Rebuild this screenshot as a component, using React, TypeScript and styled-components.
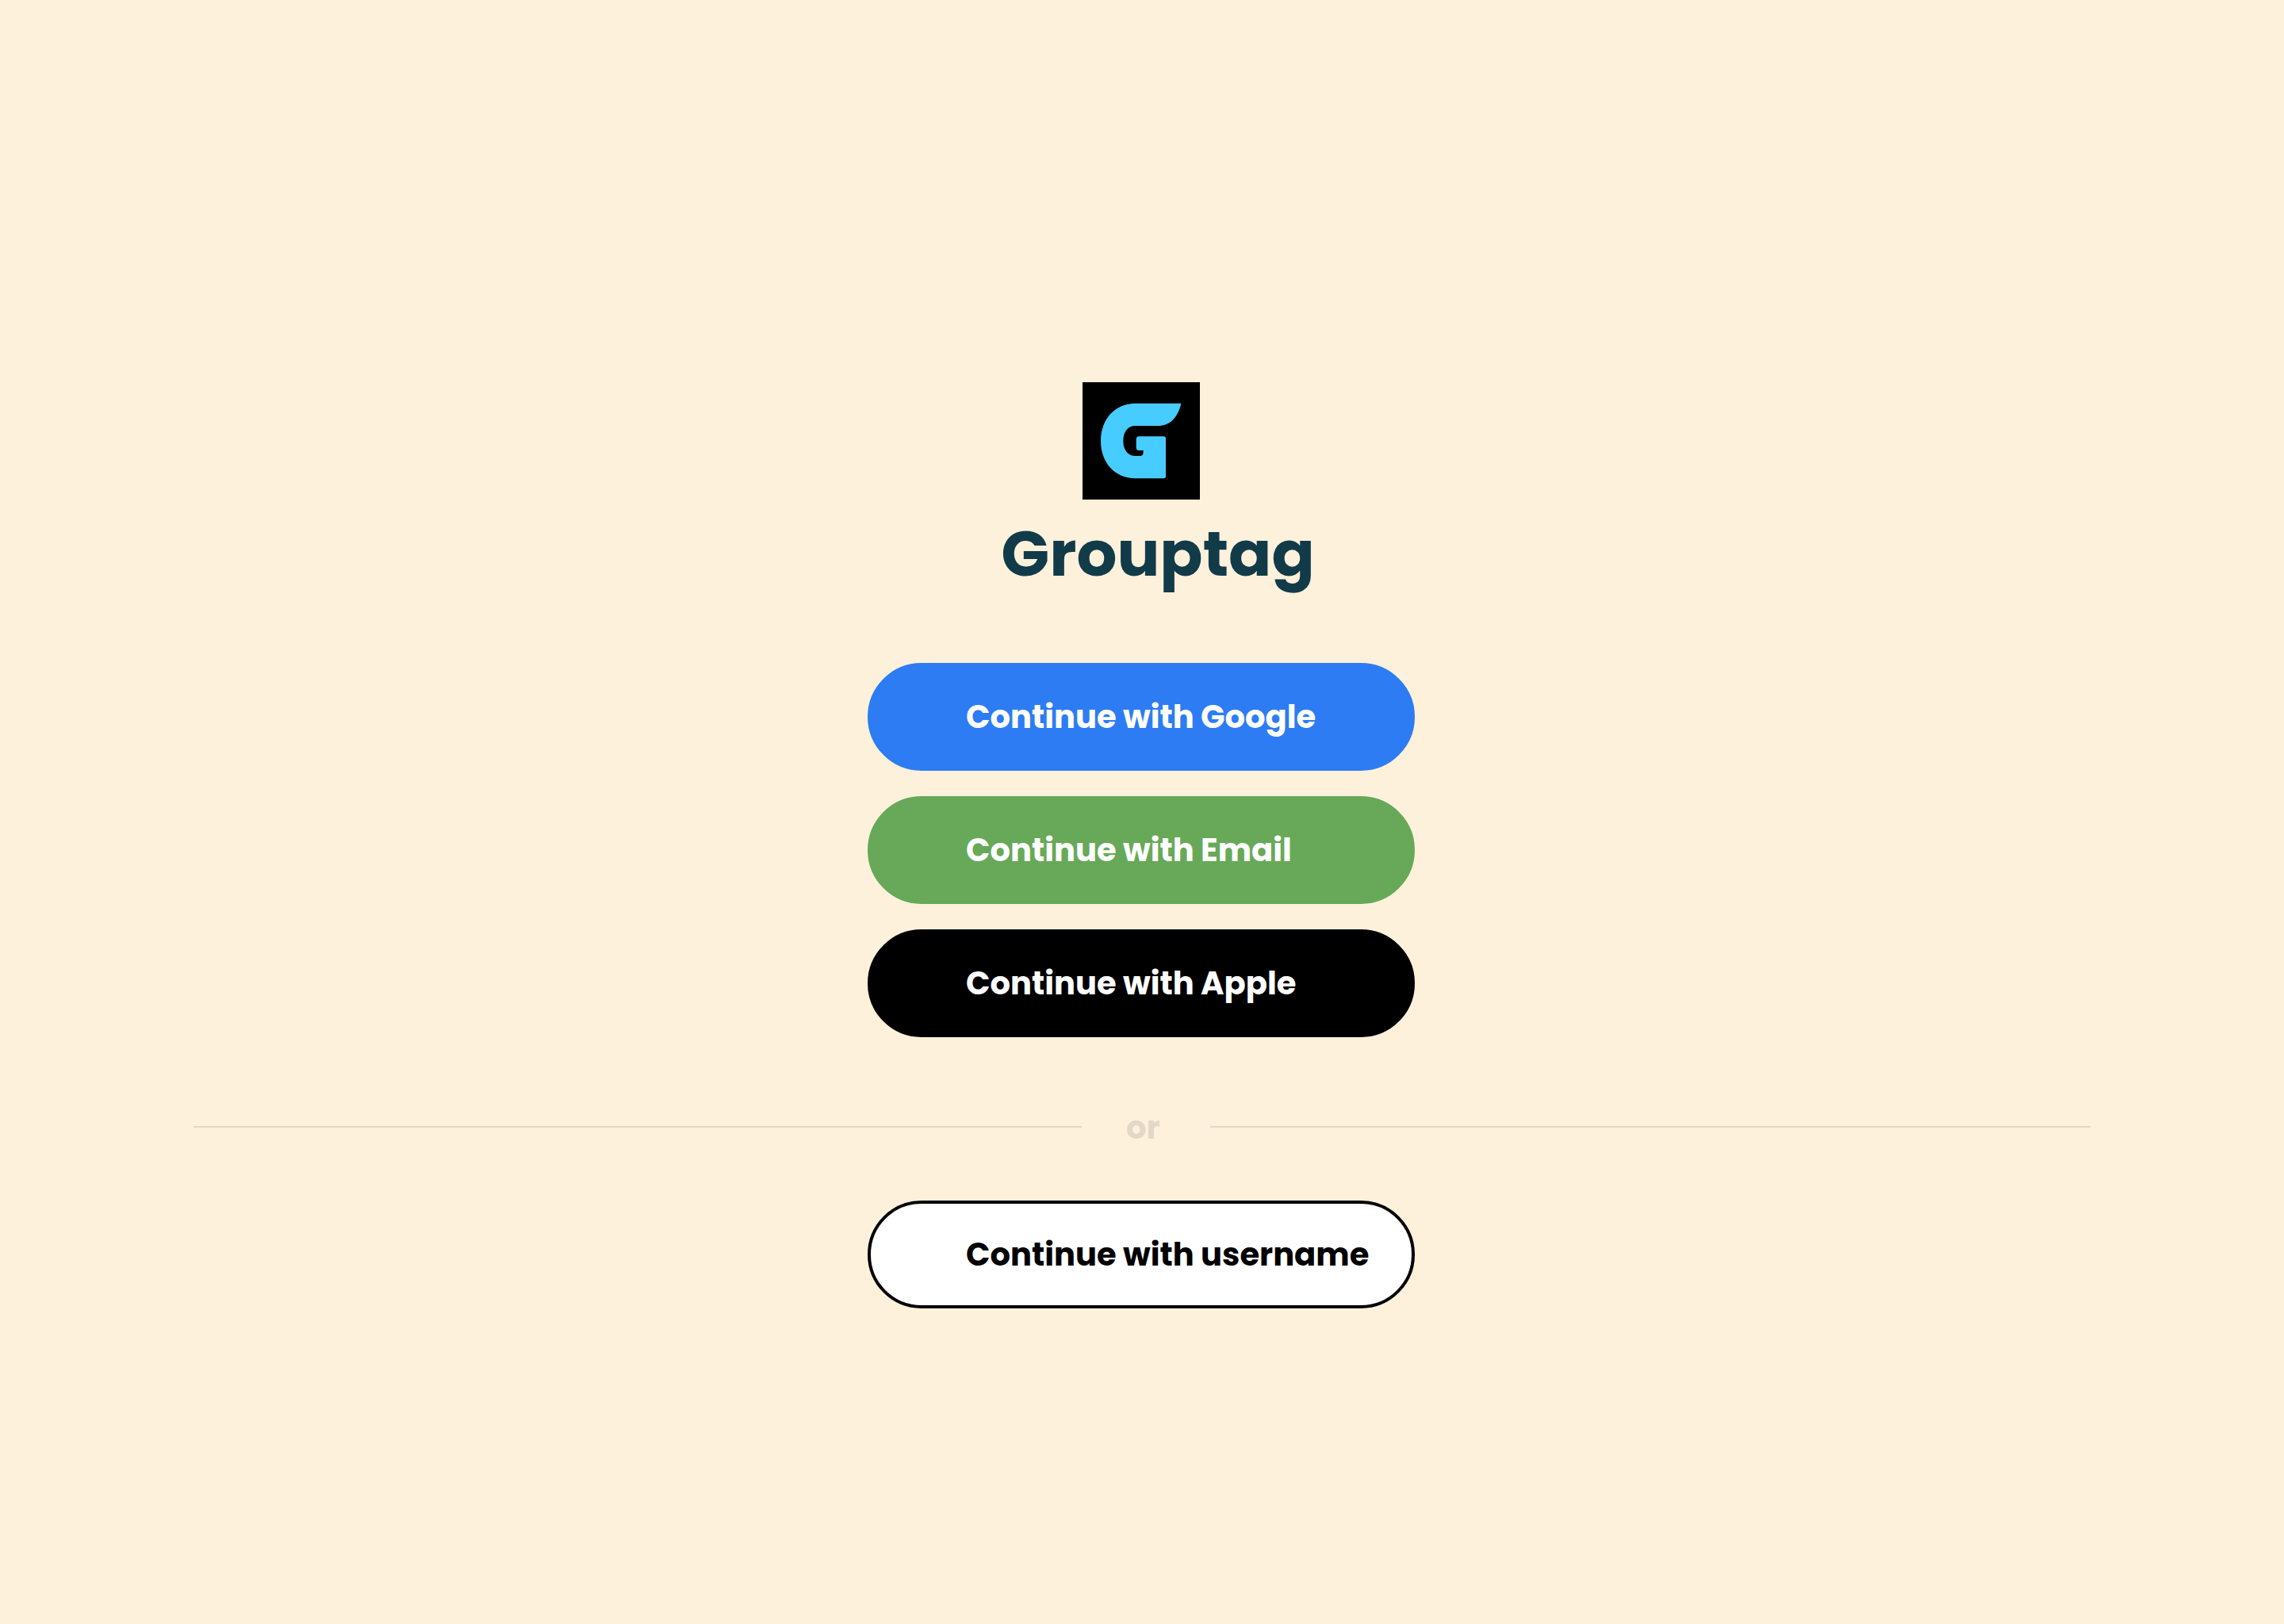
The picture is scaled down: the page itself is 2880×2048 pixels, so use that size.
import React from "react";
import styled, { createGlobalStyle } from "styled-components";

const GlobalStyle = createGlobalStyle`
  *, *::before, *::after {
    box-sizing: border-box;
  }
  body {
    margin: 0;
    background: #fef1db;
    font-family: Poppins, Inter, "Open Sans", sans-serif;
  }
`;

const Page = styled.main`
  display: flex;
  flex-direction: column;
  align-items: center;
  justify-content: center;
  min-height: 100vh;
  padding: 84px 2px 0 0;
  background: #fef1db;
`;

const Brand = styled.header`
  display: flex;
  flex-direction: column;
  align-items: center;
`;

const Logo = styled.svg`
  display: block;
  width: 148px;
  height: 148px;
  background: #000;
`;

const Title = styled.h1`
  margin: 8px 0 78px;
  padding-left: 42px;
  color: #123b49;
  font-size: 80px;
  font-weight: 700;
  line-height: 120px;
`;

const Choices = styled.div`
  display: flex;
  flex-direction: column;
  gap: 32px;
`;

type Variant = "google" | "email" | "apple" | "username";

const palette: Record<Variant, { fill: string; text: string; edge: string }> = {
  google: { fill: "#2d7cf3", text: "#fff", edge: "#2d7cf3" },
  email: { fill: "#67a958", text: "#fff", edge: "#67a958" },
  apple: { fill: "#000", text: "#fff", edge: "#000" },
  username: { fill: "#fff", text: "#000", edge: "#000" },
};

const SignInButton = styled.button<{ $variant: Variant }>`
  width: 690px;
  max-width: 100%;
  height: 136px;
  padding: 0 0 0 120px;
  border: 4px solid ${({ $variant }) => palette[$variant].edge};
  border-radius: 68px;
  background: ${({ $variant }) => palette[$variant].fill};
  color: ${({ $variant }) => palette[$variant].text};
  font-family: inherit;
  font-size: 40px;
  font-weight: 700;
  line-height: 60px;
  text-align: left;
  white-space: nowrap;
  cursor: pointer;
`;

const Divider = styled.div`
  display: grid;
  grid-template-columns: 112fr 162px 111fr;
  align-items: center;
  align-self: stretch;
  margin: 82px 242px 62px 244px;
`;

const Rule = styled.span`
  height: 2px;
  background: #e3d8c8;
`;

const DividerLabel = styled.span`
  padding: 2px 0 0 56px;
  color: #e3d8c8;
  font-size: 40px;
  font-weight: 700;
  line-height: 60px;
`;

export default function App() {
  return (
    <>
      <GlobalStyle />
      <Page>
        <Brand>
          <Logo viewBox="0 0 148 148" aria-hidden="true">
            <path
              fill="#47ccff"
              d="M66.7 26.7H124.3C120.5 44 110.5 55 95 55H66.7C57 55 51.3 62.5 51.3 74.3C51.3 86 57.5 93 66.7 93H73C75.5 93 77 91 76.7 86H71C68.7 86 67.7 84.8 67.7 82.6V72.3C67.7 69.8 69 68.3 71.3 68.3H102.3C104 68.3 105 69.3 105 71V118.6C105 120.3 104 121.3 102.3 121.3H66.7C41 121.3 23 101.5 23 74.3C23 46.5 41 26.7 66.7 26.7Z"
            />
          </Logo>
          <Title>Grouptag</Title>
        </Brand>
        <Choices>
          <SignInButton type="button" $variant="google">Continue with Google</SignInButton>
          <SignInButton type="button" $variant="email">Continue with Email</SignInButton>
          <SignInButton type="button" $variant="apple">Continue with Apple</SignInButton>
        </Choices>
        <Divider>
          <Rule />
          <DividerLabel>or</DividerLabel>
          <Rule />
        </Divider>
        <SignInButton type="button" $variant="username">Continue with username</SignInButton>
      </Page>
    </>
  );
}
